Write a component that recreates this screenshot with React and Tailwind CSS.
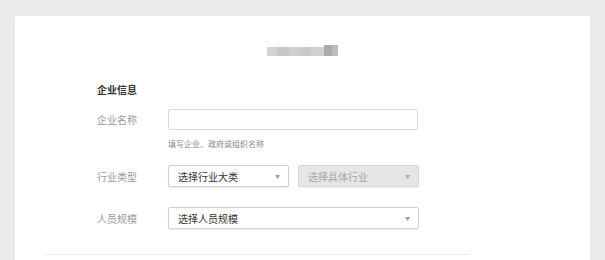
export default function App() {
  const font = { fontFamily: '"Noto Sans CJK SC", "Liberation Sans", sans-serif' };
  return (
    <div className="h-[260px] w-[605px] overflow-hidden bg-[#e9eaec] pt-4 pl-[15px] pr-[15px]" style={font}>
      <div className="h-[260px] rounded-[2px] bg-white">
        {/* blurred title */}
        <div className="flex justify-center pt-[27px]">
          <div className="flex h-[13px] items-end blur-[0.6px]">
            <div className="h-[9px] w-[10px] bg-[#d4d4d4]" />
            <div className="h-[9px] w-[12px] bg-[#c8c8c8]" />
            <div className="h-[9px] w-[12px] bg-[#cecece]" />
            <div className="h-[9px] w-[10px] bg-[#cacaca]" />
            <div className="h-[9px] w-[13px] bg-[#d0d0d0]" />
            <div className="h-[11px] w-[8px] bg-[#ababab]" />
            <div className="h-[11px] w-[6px] bg-[#bcbcbc]" />
          </div>
        </div>

        <div className="pl-[82px] pt-[27px]">
          <div className="text-[10px] font-bold leading-[14px] text-[#333]">企业信息</div>

          {/* 企业名称 */}
          <div className="mt-[12px] flex items-center">
            <div className="w-[71px] text-[10px] text-[#9a9a9a]">企业名称</div>
            <div className="h-[21px] w-[250px] rounded-[2px] border border-[#d9d9d9] bg-white" />
          </div>
          <div className="ml-[71px] mt-[9px] text-[8px] leading-[10px] text-[#8a8a8a]">填写企业、政府或组织名称</div>

          {/* 行业类型 */}
          <div className="mt-[16px] flex items-center">
            <div className="w-[71px] text-[10px] text-[#9a9a9a]">行业类型</div>
            <div className="flex h-[22px] w-[121px] items-center justify-between rounded-[2px] border border-[#d0d0d0] bg-white pl-[9px] pr-[8px] shadow-[0_1px_1px_rgba(0,0,0,0.08)]">
              <span className="text-[10px] text-[#333]">选择行业大类</span>
              <span className="text-[5px] text-[#999]">▼</span>
            </div>
            <div className="ml-[9px] flex h-[22px] w-[121px] items-center justify-between rounded-[2px] border border-[#d6d6d6] bg-[#e6e6e6] pl-[9px] pr-[8px] shadow-[0_1px_1px_rgba(0,0,0,0.06)]">
              <span className="text-[10px] text-[#a6a6a6]">选择具体行业</span>
              <span className="text-[5px] text-[#aaa]">▼</span>
            </div>
          </div>

          {/* 人员规模 */}
          <div className="mt-[20px] flex items-center">
            <div className="w-[71px] text-[10px] text-[#9a9a9a]">人员规模</div>
            <div className="flex h-[22px] w-[251px] items-center justify-between rounded-[2px] border border-[#d0d0d0] bg-white pl-[9px] pr-[8px] shadow-[0_1px_1px_rgba(0,0,0,0.08)]">
              <span className="text-[10px] text-[#333]">选择人员规模</span>
              <span className="text-[5px] text-[#999]">▼</span>
            </div>
          </div>
        </div>

        <div className="ml-[29px] mt-[25px] h-px w-[426px] bg-[#ececec]" />
      </div>
    </div>
  );
}
